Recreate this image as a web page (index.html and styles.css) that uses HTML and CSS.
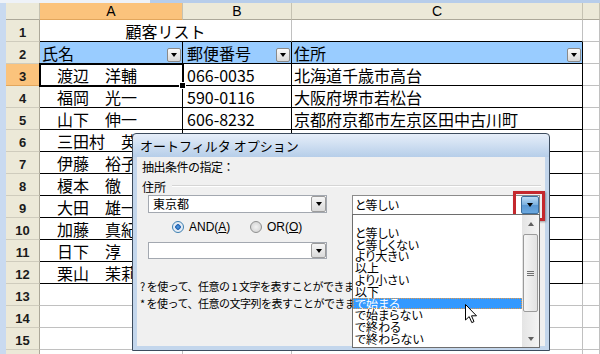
FILE: index.html
```html
<!doctype html>
<html>
<head>
<meta charset=utf-8>
<title>オートフィルタ オプション</title>
<link rel="stylesheet" href="styles.css">
</head>

<body>

<div class="topstrip"></div>

<main class="sheet">
  <div class="corner"></div>
  <div class="colhdr sel">A</div>
  <div class="colhdr">B</div>
  <div class="colhdr">C</div>
  <div class="colhdr"></div>

  <div class="rowhdr">1</div>
  <div class="cell title">顧客リスト</div>
  <div class="cell above"></div>
  <div class="cell"></div>

  <div class="rowhdr">2</div>
  <div class="cell t head"><span>氏名</span><i class="fbtn"></i></div>
  <div class="cell t head num"><span>郵便番号</span><i class="fbtn"></i></div>
  <div class="cell t head"><span>住所</span><i class="fbtn"></i></div>
  <div class="cell"></div>

  <div class="rowhdr sel">3</div>
  <div class="cell t name active">渡辺　洋輔</div>
  <div class="cell t num">066-0035</div>
  <div class="cell t">北海道千歳市高台</div>
  <div class="cell"></div>

  <div class="rowhdr">4</div>
  <div class="cell t name">福岡　光一</div>
  <div class="cell t num">590-0116</div>
  <div class="cell t">大阪府堺市若松台</div>
  <div class="cell"></div>

  <div class="rowhdr">5</div>
  <div class="cell t name">山下　伸一</div>
  <div class="cell t num">606-8232</div>
  <div class="cell t">京都府京都市左京区田中古川町</div>
  <div class="cell"></div>

  <div class="rowhdr">6</div>
  <div class="cell t name">三田村　英二</div>
  <div class="cell t num">150-0001</div>
  <div class="cell t">東京都渋谷区神宮前</div>
  <div class="cell"></div>

  <div class="rowhdr">7</div>
  <div class="cell t name">伊藤　裕子</div>
  <div class="cell t num">460-0002</div>
  <div class="cell t">愛知県名古屋市中区丸の内</div>
  <div class="cell"></div>

  <div class="rowhdr">8</div>
  <div class="cell t name">榎本　徹</div>
  <div class="cell t num">160-0022</div>
  <div class="cell t">東京都新宿区新宿</div>
  <div class="cell"></div>

  <div class="rowhdr">9</div>
  <div class="cell t name">大田　雄一</div>
  <div class="cell t num">812-0011</div>
  <div class="cell t">福岡県福岡市博多区博多駅前</div>
  <div class="cell"></div>

  <div class="rowhdr">10</div>
  <div class="cell t name">加藤　真紀</div>
  <div class="cell t num">105-0011</div>
  <div class="cell t">東京都港区芝公園</div>
  <div class="cell"></div>

  <div class="rowhdr">11</div>
  <div class="cell t name">日下　淳</div>
  <div class="cell t num">980-0021</div>
  <div class="cell t">宮城県仙台市青葉区中央</div>
  <div class="cell"></div>

  <div class="rowhdr">12</div>
  <div class="cell t name">栗山　茉莉</div>
  <div class="cell t num">113-0033</div>
  <div class="cell t">東京都文京区本郷</div>
  <div class="cell"></div>

  <div class="rowhdr">13</div>
  <div class="cell"></div><div class="cell"></div><div class="cell"></div><div class="cell"></div>
  <div class="rowhdr">14</div>
  <div class="cell"></div><div class="cell"></div><div class="cell"></div><div class="cell"></div>
  <div class="rowhdr">15</div>
  <div class="cell"></div><div class="cell"></div><div class="cell"></div><div class="cell"></div>
  <div class="rowhdr">16</div>
  <div class="cell"></div><div class="cell"></div><div class="cell"></div><div class="cell"></div>
</main>

<section class="dialog">
  <header class="caption">オートフィルタ オプション</header>
  <div class="pane">
    <div class="cond">抽出条件の指定：</div>
    <div class="field"><span>住所</span><span class="rule"></span></div>

    <div class="combos">
      <div class="combo"><span class="val">東京都</span><span class="drop"></span></div>
      <div class="combo op">
        <span class="val">と等しい</span><span class="drop hot"></span>
        <span class="mark"></span>
        <div class="list">
          <ul class="items">
            <li></li>
            <li>と等しい</li>
            <li>と等しくない</li>
            <li>より大きい</li>
            <li>以上</li>
            <li>より小さい</li>
            <li>以下</li>
            <li class="on">で始まる</li>
            <li>で始まらない</li>
            <li>で終わる</li>
            <li>で終わらない</li>
          </ul>
          <div class="scroll">
            <span class="up"></span>
            <span class="thumb"><b></b><b></b><b></b></span>
            <span class="down"></span>
          </div>
        </div>
      </div>
    </div>

    <div class="radios">
      <label class="opt"><i class="radio checked"></i><span>AND(<u>A</u>)</span></label>
      <label class="opt"><i class="radio"></i><span>OR(<u>O</u>)</span></label>
    </div>

    <div class="combo small"><span class="val"></span><span class="drop"></span></div>

    <div class="help">
      <p>? を使って、任意の 1 文字を表すことができます。</p>
      <p>* を使って、任意の文字列を表すことができます。</p>
    </div>
  </div>
</section>

<svg class="pointer" width="13" height="20" viewBox="0 0 13 20">
  <path d="M0.5 0.5 L0.5 16 L4.2 12.6 L6.8 18.6 L9 17.6 L6.5 11.8 L11.5 11.8 Z" fill="#fff" stroke="#000" stroke-width="1" stroke-linejoin="round"/>
</svg>

</body>
</html>
```

FILE: styles.css
```css
body {
  margin: 0;
  width: 600px;
  height: 354px;
  overflow: hidden;
  position: relative;
  background: #c9daf0;
  font-family: "Noto Sans CJK JP", sans-serif;
}

.topstrip {
  height: 3px;
  background: linear-gradient(90deg, #eef2f8 0, #eef2f8 150px, #b7cdea 150px);
}

/* spreadsheet */

.sheet {
  margin-left: 6px;
  display: grid;
  grid-template-columns: 34px 143px 109px 291px 1fr;
  grid-template-rows: 17px;
  grid-auto-rows: 22px;
  background: #fff;
}

.sheet > div {
  box-sizing: border-box;
  border-right: 1px solid #c0c0c0;
  border-bottom: 1px solid #c0c0c0;
  white-space: nowrap;
}

.sheet > .corner,
.sheet > .colhdr {
  background: #ece9d8;
  border-right-color: #c5c2b2;
  border-bottom-color: #aca899;
}

.colhdr {
  font-family: "Liberation Sans", sans-serif;
  font-size: 14px;
  line-height: 16px;
  text-align: center;
}

.sheet > .rowhdr {
  background: #ece9d8;
  border-right-color: #aca899;
  border-bottom-color: #cfccbd;
  font-family: "Liberation Sans", sans-serif;
  font-weight: bold;
  font-size: 13px;
  color: #1b1b1b;
  text-align: center;
  padding-top: 4px;
  line-height: 17px;
}

.sheet > .sel {
  background: #fbc37c;
  border-bottom-color: #e2a65c;
}

.cell {
  font-size: 16px;
  line-height: 18px;
  padding: 2px 2px 0;
}

.sheet > .title {
  grid-column: span 2;
  text-align: center;
  border-bottom-color: #000;
}

.sheet > .above { border-bottom-color: #000; }

.sheet > .t {
  border-right-color: #000;
  border-bottom-color: #000;
}

.name { padding-left: 17px; }
.num { padding-left: 4px; }

.sheet > .head {
  display: flex;
  padding: 0 0 0 2px;
  background: #99ccff;
}

.sheet > .head.num { padding-left: 4px; }

.head span {
  flex: 1;
  padding-top: 2px;
  line-height: 18px;
}

.fbtn {
  align-self: flex-end;
  width: 14px;
  height: 14px;
  box-sizing: border-box;
  margin: 0 1px 1px 0;
  border: 1px solid #8a8a8a;
  border-radius: 2px;
  background: linear-gradient(#fbfbfb, #d9d9d9);
  display: flex;
  align-items: center;
  justify-content: center;
}

.fbtn::after,
.drop::after {
  content: "";
  border-left: 3.5px solid transparent;
  border-right: 3.5px solid transparent;
  border-top: 4px solid #000;
}

.sheet > .active {
  position: relative;
  outline: 2px solid #000;
  outline-offset: -1px;
  z-index: 1;
}

.active::after {
  content: "";
  position: absolute;
  right: -4px;
  bottom: -4px;
  width: 5px;
  height: 5px;
  background: #000;
  border: 1px solid #fff;
}

/* dialog */

.dialog {
  position: absolute;
  left: 132px;
  top: 133px;
  width: 418px;
  height: 218px;
  box-sizing: border-box;
  border: 1px solid #3d4c5e;
  border-radius: 4px 4px 0 0;
  padding: 0 4px 4px;
  display: flex;
  flex-direction: column;
  background: linear-gradient(#e6eef9 0, #b6cee9 23px, #c3d6ec 23px);
  font-size: 12px;
  z-index: 3;
}

.caption {
  height: 23px;
  line-height: 23px;
  padding-left: 3px;
  font-size: 13px;
  color: #000;
}

.pane {
  flex: 1;
  background: #f0f0f0;
  padding-left: 5px;
  color: #000;
}

.cond {
  margin-top: 3px;
  line-height: 14px;
  letter-spacing: -0.5px;
}

.field {
  margin-top: 5px;
  height: 14px;
  display: flex;
  align-items: center;
}

.rule {
  flex: 1;
  height: 1px;
  margin: 0 4px 0 6px;
  background: #d5d5d5;
  border-bottom: 1px solid #fff;
}

.combos {
  margin-top: 2px;
  margin-left: 6px;
  display: flex;
  gap: 25px;
}

.combo {
  width: 179px;
  height: 18px;
  box-sizing: border-box;
  border: 1px solid #a3a8b0;
  background: #fff;
  display: flex;
}

.combo .val {
  flex: 1;
  padding-left: 4px;
  line-height: 16px;
  font-feature-settings: "palt";
}

.combo .drop {
  width: 15px;
  margin: 0;
  box-sizing: border-box;
  border: 1px solid #9c9c9c;
  border-radius: 2px;
  background: linear-gradient(#f6f6f6, #dadada);
  display: flex;
  align-items: center;
  justify-content: center;
}

.combo.op {
  position: relative;
  width: 188px;
  height: 20px;
  border-color: #8c8c8c;
}

.combo.op .val { line-height: 18px; padding-left: 2px; }

.combo .drop.hot {
  width: 18px;
  border-color: #3c6f9e;
  background: linear-gradient(#bcdaf4, #79b0df 50%, #5b98d2 51%, #6aa8e0);
}

.mark {
  position: absolute;
  left: 160px;
  top: -5px;
  width: 32px;
  height: 30px;
  box-sizing: border-box;
  border: 3px solid #c4282d;
  box-shadow: 1px 1px 2px rgba(0, 0, 0, 0.35);
}

.list {
  position: absolute;
  left: -1px;
  top: 18px;
  width: 188px;
  height: 134px;
  box-sizing: border-box;
  border: 1px solid #6e6e6e;
  background: #fff;
  display: flex;
}

.items {
  flex: 1;
  margin: 0;
  padding: 0;
  list-style: none;
  font-feature-settings: "palt";
}

.items li {
  height: 11.8px;
  line-height: 11.8px;
  padding-left: 2px;
  font-size: 12px;
}

.items li.on {
  background: #3399ff;
  color: #fff;
  outline: 1px dotted #e49a48;
  outline-offset: -1px;
}

.scroll {
  width: 17px;
  background: linear-gradient(90deg, #e4e4e4, #f4f4f4);
  display: flex;
  flex-direction: column;
  align-items: center;
}

.up,
.down {
  height: 17px;
  display: flex;
  align-items: center;
}

.up::after,
.down::after {
  content: "";
  border-left: 3.5px solid transparent;
  border-right: 3.5px solid transparent;
}

.up::after { border-bottom: 4px solid #606060; }
.down::after { border-top: 4px solid #606060; }

.thumb {
  margin-top: 2px;
  width: 15px;
  height: 78px;
  box-sizing: border-box;
  border: 1px solid #9b9b9b;
  border-radius: 2px;
  background: linear-gradient(90deg, #f6f6f6, #e2e2e2);
  display: flex;
  flex-direction: column;
  align-items: center;
  justify-content: center;
  gap: 1px;
}

.thumb b {
  width: 7px;
  height: 1px;
  background: #707070;
}

.down { margin-top: auto; }

.radios {
  margin-top: 6px;
  padding-left: 30px;
  height: 12px;
  display: flex;
  align-items: center;
  font-family: "Liberation Sans", sans-serif;
  font-size: 12px;
}

.opt {
  display: flex;
  align-items: center;
  gap: 5px;
}

.opt:first-child { width: 78px; }

.radio {
  width: 12px;
  height: 12px;
  box-sizing: border-box;
  border: 1px solid #8e8f8f;
  border-radius: 50%;
  background: radial-gradient(circle, #f2f2f2 0, #d8d8d8 70%);
}

.radio.checked {
  border-color: #3c7fb1;
  background: radial-gradient(circle, #58a3e8 0, #1f5fae 2.5px, #dfe9f4 3px, #e9eef4 5px);
}

.combo.small {
  margin-top: 9px;
  margin-left: 6px;
  height: 17px;
}

.help {
  margin-top: 19px;
  margin-left: -2px;
  font-size: 11px;
  line-height: 17px;
  letter-spacing: -0.5px;
  white-space: nowrap;
}

.help p { margin: 0; }

.pointer {
  position: absolute;
  left: 465px;
  top: 304px;
  z-index: 5;
}
```
